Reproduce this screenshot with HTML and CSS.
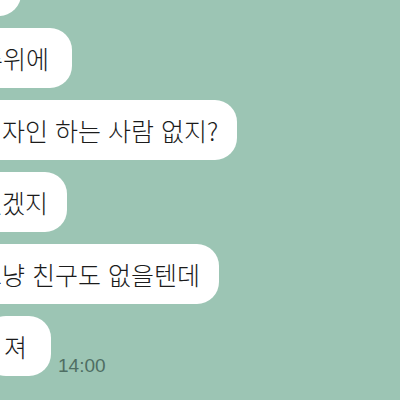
FILE: index.html
```html
<!DOCTYPE html>
<html lang="ko">
<head>
  <meta charset="UTF-8" />
  <meta name="viewport" content="width=device-width, initial-scale=1.0" />
  <title>채팅</title>
  <link rel="stylesheet" href="styles.css">
</head>
<body>
  <div class="chat">
    <div class="row"><div class="bubble">응</div></div>
    <div class="row"><div class="bubble nudge">주위에</div></div>
    <div class="row"><div class="bubble">디자인 하는 사람 없지?</div></div>
    <div class="row"><div class="bubble">있겠지</div></div>
    <div class="row"><div class="bubble">그냥 친구도 없을텐데</div></div>
    <div class="row">
      <div class="bubble last">져</div>
      <span class="time">14:00</span>
    </div>
  </div>
</body>
</html>
```

FILE: styles.css
```css
html, body {
  margin: 0;
  height: 100%;
}
body {
  background-color: #9cc5b4;
  overflow: hidden;
  font-family: "Noto Sans CJK KR", "Noto Sans", sans-serif;
  color: #1b1b1b;
}
.chat {
  display: flex;
  flex-direction: column;
  gap: 12px;
  margin-top: -44px;
  margin-left: -41px;
}
.row {
  display: flex;
  align-items: flex-end;
  gap: 8px;
}
.bubble {
  background-color: #fff;
  border-radius: 22px;
  height: 60px;
  line-height: 60px;
  padding: 0 19px 0 20px;
  font-size: 25px;
  font-weight: 300;
  white-space: nowrap;
}
.bubble.nudge {
  margin-left: 1px;
  padding-right: 23px;
}
.bubble.last {
  margin-left: 25px;
  padding-right: 24px;
}
.time {
  font-family: "Liberation Sans", Arial, sans-serif;
  font-size: 19px;
  line-height: 1;
  color: #4f6e63;
  padding-bottom: 1px;
  margin-left: -1px;
}
```
